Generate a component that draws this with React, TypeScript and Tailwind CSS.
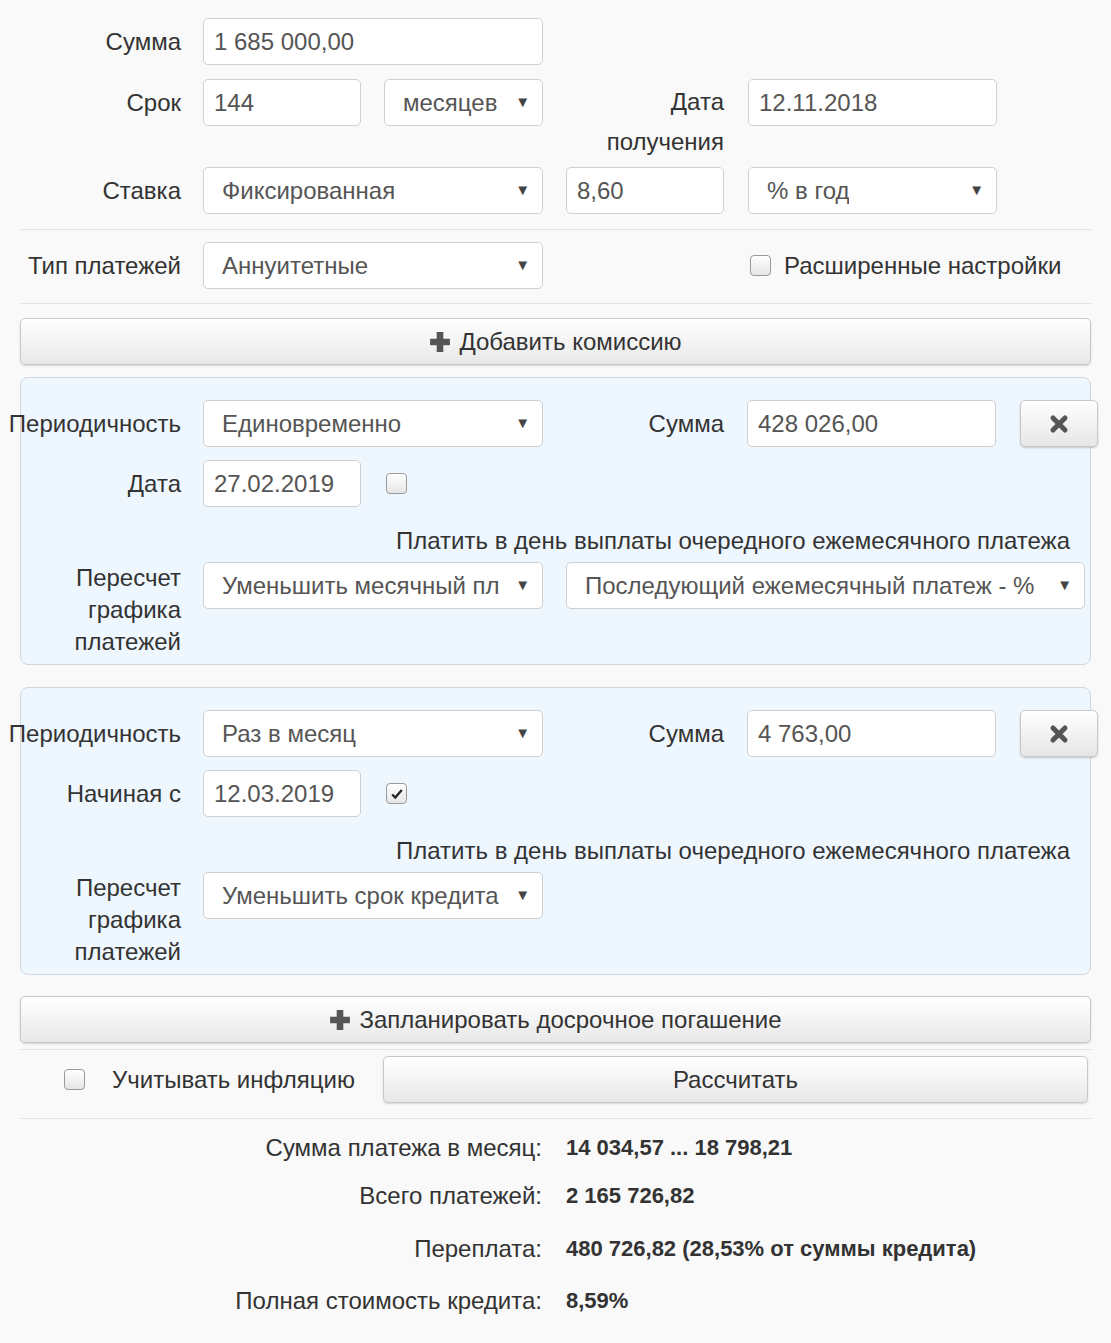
import React from 'react'

const ctl = 'h-[47px] rounded-[5px] border border-[#cfcfcf] bg-white flex items-center text-[#555] shrink-0'

function Input({ w, value }: { w: string; value: string }) {
  return <div className={`${ctl} ${w} px-[10px]`}>{value}</div>
}

function Select({ w, value }: { w: string; value: string }) {
  return (
    <div className={`${ctl} ${w} pl-[18px] pr-[12px] justify-between overflow-hidden`}>
      <span className="whitespace-nowrap overflow-hidden">{value}</span>
      <span className="text-[15px] text-[#444] ml-2">▼</span>
    </div>
  )
}

function Label({ children, w = 'w-[181px]' }: { children: React.ReactNode; w?: string }) {
  return <div className={`${w} shrink-0 text-right text-[#333] leading-[32px] whitespace-nowrap`}>{children}</div>
}

function Check({ checked }: { checked?: boolean }) {
  return (
    <div className="h-[21px] w-[21px] rounded-[4px] border border-[#999] bg-gradient-to-b from-white to-[#e6e6e6] flex items-center justify-center shrink-0">
      {checked && (
        <svg viewBox="0 0 16 16" className="h-[14px] w-[14px]">
          <path d="M2.5 8.5 L6 12 L13.5 3.5" fill="none" stroke="#222" strokeWidth="2.6" />
        </svg>
      )}
    </div>
  )
}

function Btn({ children, w = 'w-full' }: { children: React.ReactNode; w?: string }) {
  return (
    <div className={`${w} h-[47px] rounded-[5px] border border-[#c8c8c8] bg-gradient-to-b from-white to-[#e8e8e8] shadow-[0_1px_2px_rgba(0,0,0,0.15)] flex items-center justify-center text-[#333]`}>
      {children}
    </div>
  )
}

function Plus() {
  return (
    <svg viewBox="0 0 20 20" className="h-[22px] w-[22px] mr-[8px]">
      <path d="M7 1h6v6h6v6h-6v6H7v-6H1V7h6z" fill="#555" />
    </svg>
  )
}

function XBtn() {
  return (
    <div className="ml-[24px] shrink-0 h-[47px] w-[78px] rounded-[5px] border border-[#c8c8c8] bg-gradient-to-b from-white to-[#e6e6e6] shadow-[0_1px_2px_rgba(0,0,0,0.2)] flex items-center justify-center">
      <svg viewBox="0 0 20 20" className="h-[20px] w-[20px]">
        <path d="M4 4 L16 16 M16 4 L4 16" stroke="#555" strokeWidth="5" strokeLinecap="round" />
      </svg>
    </div>
  )
}

function Panel({ sum, dateLabel, date, checked, sel1, sel2 }: {
  sum: string; dateLabel: string; date: string; checked?: boolean; sel1: string; sel2?: string
}) {
  return (
    <div className="mx-[20px] rounded-[8px] border border-[#cfd6dd] bg-[#eef6fe] pt-[22px] pb-[6px]">
      <div className="-ml-[21px] flex items-center">
        <Label>Периодичность</Label>
        <div className="ml-[22px] shrink-0"><Select w="w-[340px]" value={sel1.split('|')[0]} /></div>
        <Label>Сумма</Label>
        <div className="ml-[23px] shrink-0"><Input w="w-[249px]" value={sum} /></div>
        <XBtn />
      </div>
      <div className="-ml-[21px] mt-[13px] flex items-center">
        <Label>{dateLabel}</Label>
        <div className="ml-[22px] shrink-0"><Input w="w-[158px]" value={date} /></div>
        <div className="ml-[25px]"><Check checked={checked} /></div>
      </div>
      <div className="mt-[16px] pr-[20px] text-right text-[#333]">Платить в день выплаты очередного ежемесячного платежа</div>
      <div className="-ml-[21px] mt-[3px] flex items-start">
        <Label>Пересчет<br />графика<br />платежей</Label>
        <div className="ml-[22px] shrink-0"><Select w="w-[340px]" value={sel1.split('|')[1]} /></div>
        {sel2 && <div className="ml-[23px] shrink-0"><Select w="w-[519px]" value={sel2} /></div>}
      </div>
    </div>
  )
}

export default function App() {
  return (
    <div className="min-h-[1343px] w-[1111px] bg-[#f9f9f9] text-[24px] text-[#333] pt-[18px] overflow-hidden" style={{ fontFamily: '"Liberation Sans", Arial, sans-serif' }}>
      <div className="flex items-center">
        <Label>Сумма</Label>
        <div className="ml-[22px]"><Input w="w-[340px]" value="1 685 000,00" /></div>
      </div>
      <div className="mt-[14px] flex items-start h-[47px]">
        <Label><span className="leading-[47px]">Срок</span></Label>
        <div className="ml-[22px]"><Input w="w-[158px]" value="144" /></div>
        <div className="ml-[23px]"><Select w="w-[159px]" value="месяцев" /></div>
        <div className="w-[181px] text-right leading-[40px] pt-[3px] relative z-10">Дата<br />получения</div>
        <div className="ml-[24px]"><Input w="w-[249px]" value="12.11.2018" /></div>
      </div>
      <div className="mt-[41px] flex items-center">
        <Label>Ставка</Label>
        <div className="ml-[22px]"><Select w="w-[340px]" value="Фиксированная" /></div>
        <div className="ml-[23px]"><Input w="w-[158px]" value="8,60" /></div>
        <div className="ml-[24px]"><Select w="w-[249px]" value="% в год" /></div>
      </div>
      <div className="mx-[20px] mt-[15px] border-t border-[#e2e2e2]" />
      <div className="mt-[12px] flex items-center">
        <Label>Тип платежей</Label>
        <div className="ml-[22px]"><Select w="w-[340px]" value="Аннуитетные" /></div>
        <div className="ml-[207px]"><Check /></div>
        <div className="ml-[13px] whitespace-nowrap">Расширенные настройки</div>
      </div>
      <div className="mx-[20px] mt-[14px] border-t border-[#e2e2e2]" />
      <div className="mx-[20px] mt-[14px]"><Btn><Plus />Добавить комиссию</Btn></div>
      <div className="mt-[12px]">
        <Panel sum="428 026,00" dateLabel="Дата" date="27.02.2019" sel1="Единовременно|Уменьшить месячный пл" sel2="Последующий ежемесячный платеж - %" />
      </div>
      <div className="mt-[22px]">
        <Panel sum="4 763,00" dateLabel="Начиная с" date="12.03.2019" checked sel1="Раз в месяц|Уменьшить срок кредита" />
      </div>
      <div className="mx-[20px] mt-[21px]"><Btn><Plus />Запланировать досрочное погашение</Btn></div>
      <div className="mx-[20px] mt-[6px] border-t border-[#e2e2e2]" />
      <div className="mt-[6px] flex items-center">
        <div className="ml-[64px]"><Check /></div>
        <div className="ml-[27px] w-[271px] whitespace-nowrap">Учитывать инфляцию</div>
        <div className="w-[705px]"><Btn>Рассчитать</Btn></div>
      </div>
      <div className="mx-[20px] mt-[15px] border-t border-[#e2e2e2]" />
      <div className="mt-[10px] grid grid-cols-[542px_1fr] gap-x-[24px] items-center">
        <div className="text-right h-[48px] leading-[38px] whitespace-nowrap">Сумма платежа в месяц:</div>
        <div className="font-bold text-[22px] h-[48px] leading-[38px]">14 034,57 ... 18 798,21</div>
        <div className="text-right h-[53px] leading-[38px]">Всего платежей:</div>
        <div className="font-bold text-[22px] h-[53px] leading-[38px]">2 165 726,82</div>
        <div className="text-right h-[52px] leading-[38px]">Переплата:</div>
        <div className="font-bold text-[22px] h-[52px] leading-[38px]">480 726,82 (28,53% от суммы кредита)</div>
        <div className="text-right h-[52px] leading-[38px] whitespace-nowrap">Полная стоимость кредита:</div>
        <div className="font-bold text-[22px] h-[52px] leading-[38px]">8,59%</div>
      </div>
    </div>
  )
}
